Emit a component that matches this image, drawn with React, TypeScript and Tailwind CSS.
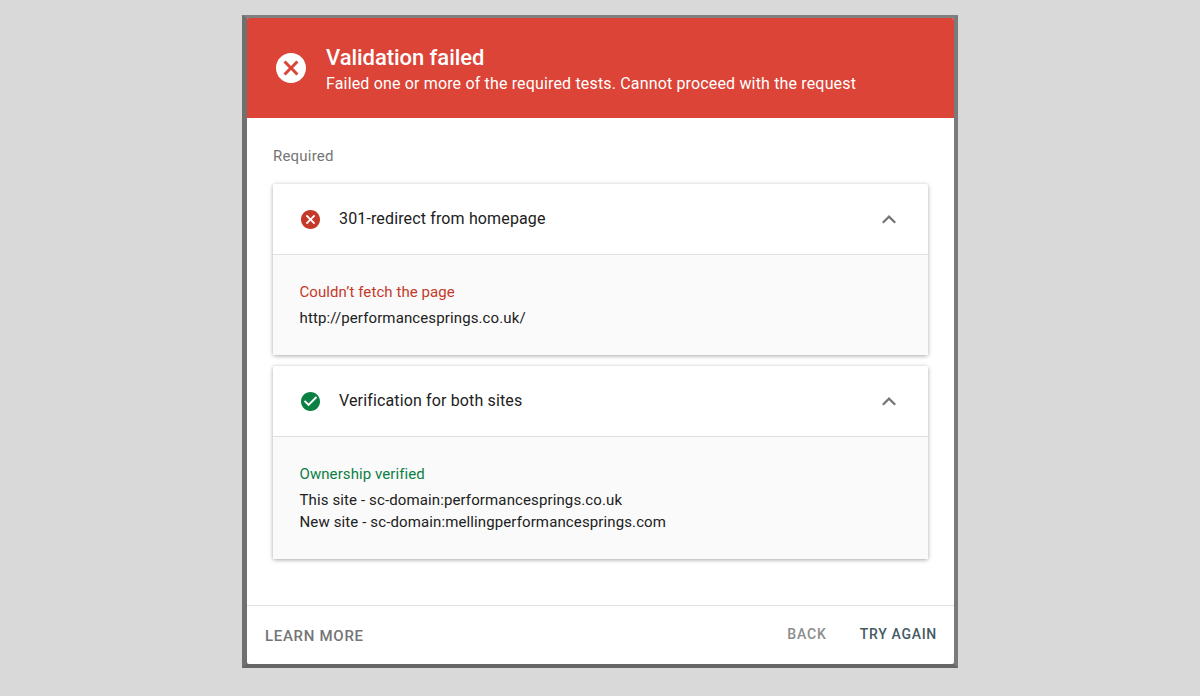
const font = { fontFamily: "Roboto, sans-serif" }

const CancelIcon = ({ className }: { className: string }) => (
  <svg viewBox="2 2 20 20" className={className} fill="currentColor">
    <path d="M12 2C6.47 2 2 6.47 2 12s4.47 10 10 10 10-4.47 10-10S17.53 2 12 2zm5 13.59L15.59 17 12 13.41 8.41 17 7 15.59 10.59 12 7 8.41 8.41 7 12 10.59 15.59 7 17 8.41 13.41 12 17 15.59z" />
  </svg>
)

const CheckIcon = ({ className }: { className: string }) => (
  <svg viewBox="2 2 20 20" className={className} fill="currentColor">
    <path d="M12 2C6.48 2 2 6.48 2 12s4.48 10 10 10 10-4.48 10-10S17.52 2 12 2zm-2 15l-5-5 1.41-1.41L10 14.17l7.59-7.59L19 8l-9 9z" />
  </svg>
)

const Chevron = () => (
  <svg viewBox="0 0 14 9" className="w-[14px] h-[9px] text-[#757575]" fill="currentColor">
    <path d="M7 0 L14 7 L12.4 8.6 L7 3.2 L1.6 8.6 L0 7 Z" />
  </svg>
)

const TestCard = ({ icon, title, status, statusColor, lines, bodyHeight }: {
  icon: React.ReactNode
  title: string
  status: string
  statusColor: string
  lines: string[]
  bodyHeight: string
}) => (
  <div className="rounded-[2px] bg-white shadow-[0_1px_4px_rgba(0,0,0,0.35)]">
    <div className="h-[70px] flex items-center pl-[28px] pr-[32px]">
      {icon}
      <div className="ml-[19px] text-[16px] tracking-[0.14px] text-[#212121] flex-1">{title}</div>
      <Chevron />
    </div>
    <div className={`${bodyHeight} border-t border-[#e0e0e0] bg-[#fafafa] pl-[26.5px] pt-[26px]`}>
      <div className={`text-[15px] leading-[22px] tracking-[0.08px] ${statusColor}`}>{status}</div>
      <div className="mt-[4px] text-[15px] leading-[22px] tracking-[0.12px] text-[#212121]">
        {lines.map((line) => (
          <div key={line}>{line}</div>
        ))}
      </div>
    </div>
  </div>
)

export default function App() {
  return (
    <div className="h-[696px] bg-[#d9d9d9] flex justify-center pt-[15px]" style={font}>
      <div className="w-[716px] h-[653px] bg-[#757575] border-t-[3px] border-l-[5px] border-r-[4px] border-b-[4px] border-t-[#808080] border-l-[#707070] border-r-[#7a7a7a] border-b-[#666666]">
        <div className="h-full rounded-[2px] overflow-hidden bg-white flex flex-col">
          <div className="h-[100px] shrink-0 bg-[#db4437] flex items-center pl-[29px] text-white">
            <CancelIcon className="w-[30px] h-[30px]" />
            <div className="ml-[20px] mt-[6px]">
              <div className="text-[22px] font-medium leading-[26px] tracking-[-0.05px]">Validation failed</div>
              <div className="text-[16px] leading-[26px] tracking-[0.16px]">
                Failed one or more of the required tests. Cannot proceed with the request
              </div>
            </div>
          </div>
          <div className="flex-1 px-[26px] pt-[28px]">
            <div className="text-[15px] leading-[20px] tracking-[0.2px] text-[#757575]">Required</div>
            <div className="mt-[18px] flex flex-col gap-[11px]">
              <TestCard
                icon={<CancelIcon className="w-[19px] h-[19px] text-[#c53929]" />}
                title="301-redirect from homepage"
                status="Couldn’t fetch the page"
                statusColor="text-[#c53929]"
                lines={["http://performancesprings.co.uk/"]}
                bodyHeight="h-[101px]"
              />
              <TestCard
                icon={<CheckIcon className="w-[19px] h-[19px] text-[#0b8043]" />}
                title="Verification for both sites"
                status="Ownership verified"
                statusColor="text-[#0b8043]"
                lines={[
                  "This site - sc-domain:performancesprings.co.uk",
                  "New site - sc-domain:mellingperformancesprings.com",
                ]}
                bodyHeight="h-[123px]"
              />
            </div>
          </div>
          <div className="h-[59px] shrink-0 border-t border-[#e0e0e0] flex items-center pl-[18px] pr-[17px] font-medium">
            <div className="mt-[2px] text-[15px] tracking-[0.7px] text-[#757575]">LEARN MORE</div>
            <div className="ml-auto -mt-[1px] text-[14px] tracking-[0.9px] text-[#8d8d8d]">BACK</div>
            <div className="ml-[33px] -mt-[1px] text-[14px] tracking-[0.7px] text-[#455a64]">TRY AGAIN</div>
          </div>
        </div>
      </div>
    </div>
  )
}
